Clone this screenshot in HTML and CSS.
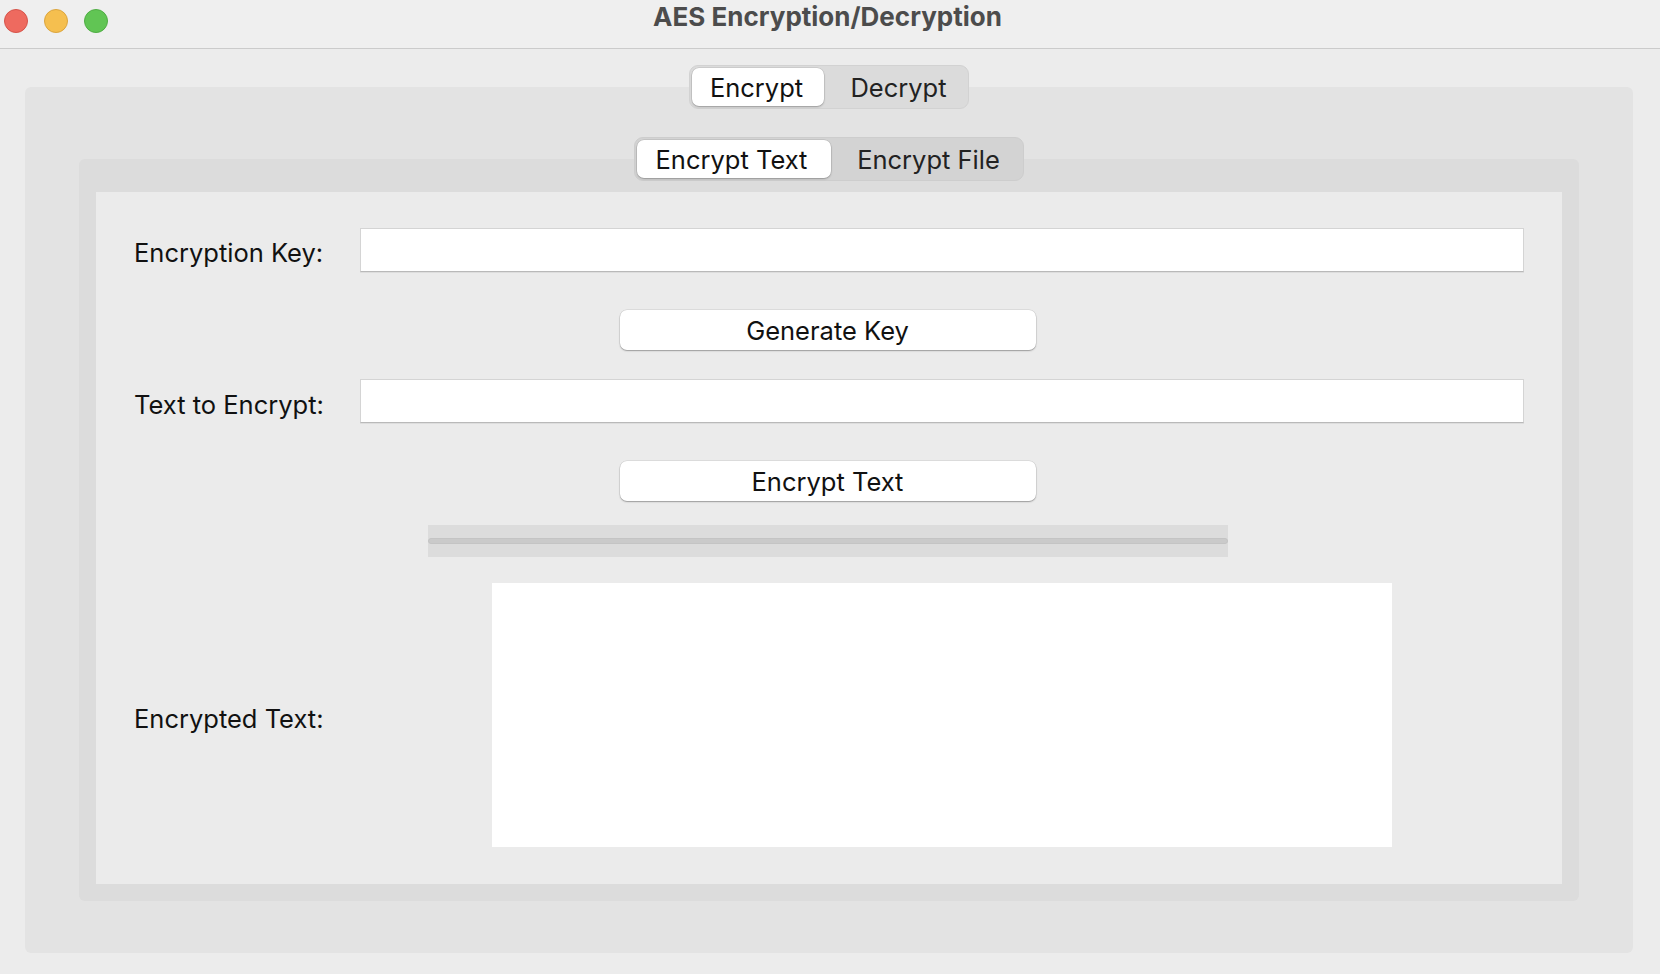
FILE: index.html
```html
<!DOCTYPE html>
<html>
<head>
<meta charset="utf-8">
<title>AES Encryption/Decryption</title>
<link rel="stylesheet" href="styles.css">
</head>
<body>
<div class="window">
  <div class="titlebar">
    <div class="lights">
      <span class="light red"></span>
      <span class="light yellow"></span>
      <span class="light green"></span>
    </div>
    <div class="title">AES Encryption/Decryption</div>
  </div>
  <div class="main">
    <div class="outer-panel">
      <div class="seg seg-outer">
        <div class="seg-item active w-enc">Encrypt</div>
        <div class="seg-item w-dec">Decrypt</div>
      </div>
      <div class="inner-panel">
        <div class="seg seg-inner">
          <div class="seg-item active w-et">Encrypt Text</div>
          <div class="seg-item w-ef">Encrypt File</div>
        </div>
        <div class="content">
          <div class="form">
            <div class="label">Encryption Key:</div>
            <div class="entry"></div>

            <div class="btn-row"><div class="button">Generate Key</div></div>

            <div class="label label-mid">Text to Encrypt:</div>
            <div class="entry"></div>

            <div class="btn-row"><div class="button">Encrypt Text</div></div>

            <div class="progress-row">
              <div class="progress"><div class="trough"></div></div>
            </div>

            <div class="label label-low">Encrypted Text:</div>
            <div class="text-cell"><div class="textarea"></div></div>
          </div>
        </div>
      </div>
    </div>
  </div>
</div>
</body>
</html>
```

FILE: styles.css
```css
* { box-sizing: border-box; }
html, body { margin: 0; padding: 0; }
body {
  width: 1660px;
  height: 974px;
  background: #ececec;
  font-family: Inter, "Liberation Sans", sans-serif;
  color: #1b1b1b;
  overflow: hidden;
}
.window { width: 1660px; height: 974px; background: #ececec; }
.titlebar {
  height: 49px;
  background: #efefef;
  border-bottom: 1px solid #cbcbcb;
  position: relative;
  display: flex;
  align-items: center;
  justify-content: center;
}
.lights {
  position: absolute;
  left: 4px;
  top: 9px;
  display: flex;
  gap: 16px;
}
.light {
  width: 24px;
  height: 24px;
  border-radius: 50%;
  display: block;
}
.red { background: #ee6a5f; border: 1px solid #d5544a; }
.yellow { background: #f5bf4f; border: 1px solid #dba53e; }
.green { background: #61c554; border: 1px solid #4fad44; }
.title {
  font-weight: 700;
  font-size: 26px;
  color: #4c4c4c;
  margin-top: -16px;
  margin-left: -5px;
}
.main {
  padding: 38px 27px 21px 25px;
}
.outer-panel {
  background: #e3e3e3;
  border-radius: 6px;
  height: 866px;
  padding: 0 54px 52px 54px;
  display: flex;
  flex-direction: column;
  align-items: center;
}
.seg {
  display: flex;
  height: 44px;
  margin-top: -22px;
  padding: 2px;
  border-radius: 9px;
  background: #dbdbdb;
  border: 1px solid #d2d2d2;
}
.seg-outer { margin-left: -1px; }
.seg-inner { background: #d3d3d3; border-color: #cdcdcd; margin-left: -1px; }
.seg-item {
  height: 38px;
  display: flex;
  align-items: center;
  justify-content: center;
  font-size: 25.5px;
  color: #222;
  border-radius: 7px;
}
.seg-item.active {
  background: #fff;
  color: #111;
  box-shadow: 0 1px 2px rgba(0,0,0,0.25), 0 0 0 0.5px rgba(0,0,0,0.12);
}
.w-enc { width: 132px; padding-right: 2px; }
.w-dec { width: 142px; padding-left: 8px; }
.w-et { width: 194px; padding-right: 4px; }
.w-ef { width: 190px; padding-left: 6px; }
.inner-panel {
  margin-top: 50px;
  width: 100%;
  flex: 1;
  background: #dcdcdc;
  border-radius: 6px;
  padding: 0 17px 17px 17px;
  display: flex;
  flex-direction: column;
  align-items: center;
}
.content {
  margin-top: 11px;
  width: 100%;
  flex: 1;
  background: #ebebeb;
  padding: 36px 38px 36px 39px;
}
.form {
  display: grid;
  grid-template-columns: 225px 1fr;
  align-items: center;
}
.label {
  font-size: 25.5px;
  color: #111;
  white-space: nowrap;
  padding-top: 4px;
  margin-left: -1px;
}
.label-mid { padding-top: 7px; }
.label-low { padding-top: 6px; }
.entry {
  height: 44px;
  background: #fff;
  border: 1px solid #d4d4d4;
  border-bottom: 1px solid #b9b9b9;
  box-shadow: 0 1px 0 rgba(0,0,0,0.06);
}
.btn-row {
  grid-column: 1 / 3;
  display: flex;
  justify-content: center;
  margin: 38px 0 29px;
  padding-right: 4px;
}
.button {
  width: 416px;
  height: 40px;
  background: #fff;
  border-radius: 7px;
  box-shadow: 0 1px 1.5px rgba(0,0,0,0.3), 0 0 0 0.5px rgba(0,0,0,0.12);
  display: flex;
  align-items: center;
  justify-content: center;
  font-size: 25.5px;
  color: #111;
  padding-top: 1px;
}
.progress-row {
  grid-column: 1 / 3;
  display: flex;
  justify-content: center;
  margin: -5px 0 26px;
  padding-right: 4px;
}
.progress {
  width: 800px;
  height: 32px;
  background: #dcdcdc;
  display: flex;
  align-items: center;
}
.trough {
  width: 100%;
  height: 6px;
  border-radius: 3px;
  background: #cacaca;
  border: 1px solid #c4c4c4;
}
.text-cell {
  display: flex;
  justify-content: center;
}
.textarea {
  width: 900px;
  height: 264px;
  background: #fff;
}
```
